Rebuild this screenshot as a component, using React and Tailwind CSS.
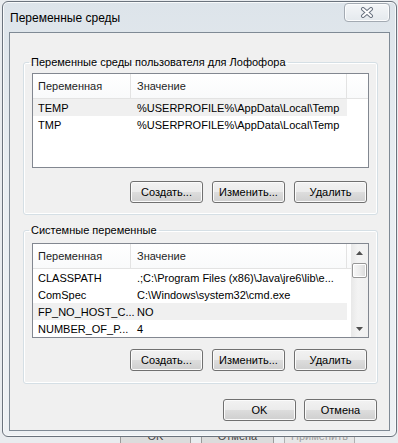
import React from "react";

function Btn({ children, className = "" }) {
  return (
    <div
      className={
        "w-[73px] h-[22px] rounded-[3px] border border-[#707070] bg-[linear-gradient(180deg,#f2f2f2_0%,#ebebeb_50%,#dddddd_50%,#cfcfcf_100%)] shadow-[inset_0_0_0_1px_#fbfbfb] text-[11px] leading-none text-black flex items-center justify-center " +
        className
      }
    >
      {children}
    </div>
  );
}

function Arrow({ up }) {
  return (
    <svg width="7" height="4" viewBox="0 0 7 4">
      <polygon points={up ? "3.5,0 7,4 0,4" : "0,0 7,0 3.5,4"} fill="#505050" />
    </svg>
  );
}

function Scrollbar() {
  return (
    <div className="w-[17px] flex flex-col bg-[linear-gradient(90deg,#e8e8e8,#f3f3f3_40%,#f0f0f0)]">
      <div className="h-[17px] flex items-center justify-center">
        <Arrow up />
      </div>
      <div className="flex-1 pt-[2px]">
        <div className="mx-[1px] h-[15px] rounded-[2px] border border-[#979797] bg-[linear-gradient(90deg,#f7f7f7,#ececec_50%,#d9d9d9)] shadow-[inset_0_0_0_1px_#ffffff]"></div>
      </div>
      <div className="h-[17px] flex items-center justify-center">
        <Arrow />
      </div>
    </div>
  );
}

function List({ rows, hi, scroll }) {
  return (
    <div className="mx-[8px] h-[95px] border border-[#828790] bg-white flex">
      <div className="flex-1 flex flex-col overflow-hidden">
        <div className="h-[25px] shrink-0 flex border-b border-[#e3e3e3] bg-[linear-gradient(180deg,#ffffff,#f9fafb)] text-[#1e1e1e]">
          <div className="w-[98px] shrink-0 border-r border-[#e3e3e3] pl-[5px] flex items-center">Переменная</div>
          <div className="w-[216px] shrink-0 border-r border-[#e3e3e3] pl-[6px] flex items-center">Значение</div>
        </div>
        {rows.map((r, i) => (
          <div
            key={i}
            className={
              "h-[17px] shrink-0 w-[314px] flex items-center pt-[1px] text-black whitespace-nowrap " +
              (i === hi ? "bg-[#f0f0f0]" : "")
            }
          >
            <div className="w-[98px] shrink-0 pl-[5px]">{r[0]}</div>
            <div className="w-[216px] shrink-0 pl-[6px] overflow-hidden">{r[1]}</div>
          </div>
        ))}
      </div>
      {scroll && <Scrollbar />}
    </div>
  );
}

function Group({ title, children, className = "" }) {
  return (
    <fieldset
      className={
        "mx-0 border border-[#d5dfe5] rounded-[3px] shadow-[inset_0_0_0_1px_#ffffff] " + className
      }
    >
      <legend className="ml-[5px] px-[2px] leading-[16px] text-black">{title}</legend>
      {children}
    </fieldset>
  );
}

export default function App() {
  return (
    <div className="w-[398px] h-[443px] overflow-hidden bg-[#e9ecef] font-['Liberation_Sans',Arial,sans-serif] text-[11px]">
      <div className="ml-[2px] mt-[1px] w-[395px] h-[436px] rounded-[6px] border border-[#6b737d] bg-[linear-gradient(180deg,#dde4ea_0%,#e9eef2_40%,#eef1f4_100%)] flex flex-col shadow-[inset_0_0_0_1px_#f8fafb]">
        <div className="h-[30px] flex justify-between">
          <div className="pl-[7px] pt-[8px] leading-[16px] text-[12px] text-black">Переменные среды</div>
          <div className="mt-[1px] mr-[6px] w-[46px] h-[19px] rounded-[4px] border border-[#a3aab2] bg-[linear-gradient(180deg,#f4f6f8,#e4e9ed)] shadow-[inset_0_0_0_1px_#fbfcfd] flex items-center justify-center">
            <svg width="14" height="11" viewBox="0 0 14 11">
              <path d="M3 2 L11 9 M11 2 L3 9" stroke="#6a7380" strokeWidth="4" strokeLinecap="round" fill="none" />
              <path d="M3 2 L11 9 M11 2 L3 9" stroke="#ffffff" strokeWidth="2" strokeLinecap="round" fill="none" />
            </svg>
          </div>
        </div>
        <div className="mx-[6px] h-[399px] border border-[#7f8a95] bg-[#f0f0f0] flex flex-col">
          <div className="ml-[13px] mr-[11px] mt-[21px]">
            <Group title="Переменные среды пользователя для Лофофора" className="pt-[3px] pb-[11px]">
              <List
                hi={0}
                rows={[
                  ["TEMP", "%USERPROFILE%\\AppData\\Local\\Temp"],
                  ["TMP", "%USERPROFILE%\\AppData\\Local\\Temp"],
                ]}
              />
              <div className="mt-[13px] mr-[10px] flex justify-end gap-[9px]">
                <Btn>Создать...</Btn>
                <Btn>Изменить...</Btn>
                <Btn>Удалить</Btn>
              </div>
            </Group>
          </div>
          <div className="ml-[13px] mr-[11px] mt-[7px]">
            <Group title="Системные переменные" className="pt-[5px] pb-[12px]">
              <List
                hi={2}
                scroll
                rows={[
                  ["CLASSPATH", ".;C:\\Program Files (x86)\\Java\\jre6\\lib\\e..."],
                  ["ComSpec", "C:\\Windows\\system32\\cmd.exe"],
                  ["FP_NO_HOST_C...", "NO"],
                  ["NUMBER_OF_P...", "4"],
                ]}
              />
              <div className="mt-[11px] mr-[10px] flex justify-end gap-[9px]">
                <Btn>Создать...</Btn>
                <Btn>Изменить...</Btn>
                <Btn>Удалить</Btn>
              </div>
            </Group>
          </div>
          <div className="mt-[15px] mr-[12px] flex justify-end gap-[8px]">
            <Btn>OK</Btn>
            <Btn>Отмена</Btn>
          </div>
        </div>
      </div>
      <div className="h-[6px] overflow-hidden flex pl-[120px] gap-[10px]">
        <div className="-mt-[12px] w-[71px] h-[22px] shrink-0 rounded-[3px] border border-[#9a9a9a] bg-[#dcdcdc] flex items-center justify-center text-[#444]">OK</div>
        <div className="-mt-[12px] w-[73px] h-[22px] shrink-0 rounded-[3px] border border-[#9a9a9a] bg-[#dcdcdc] flex items-center justify-center text-[#444]">Отмена</div>
        <div className="-mt-[12px] w-[71px] h-[22px] shrink-0 rounded-[3px] border border-[#b0b0b0] bg-[#e6e6e6] flex items-center justify-center text-[#a0a0a0]">Применить</div>
      </div>
    </div>
  );
}
